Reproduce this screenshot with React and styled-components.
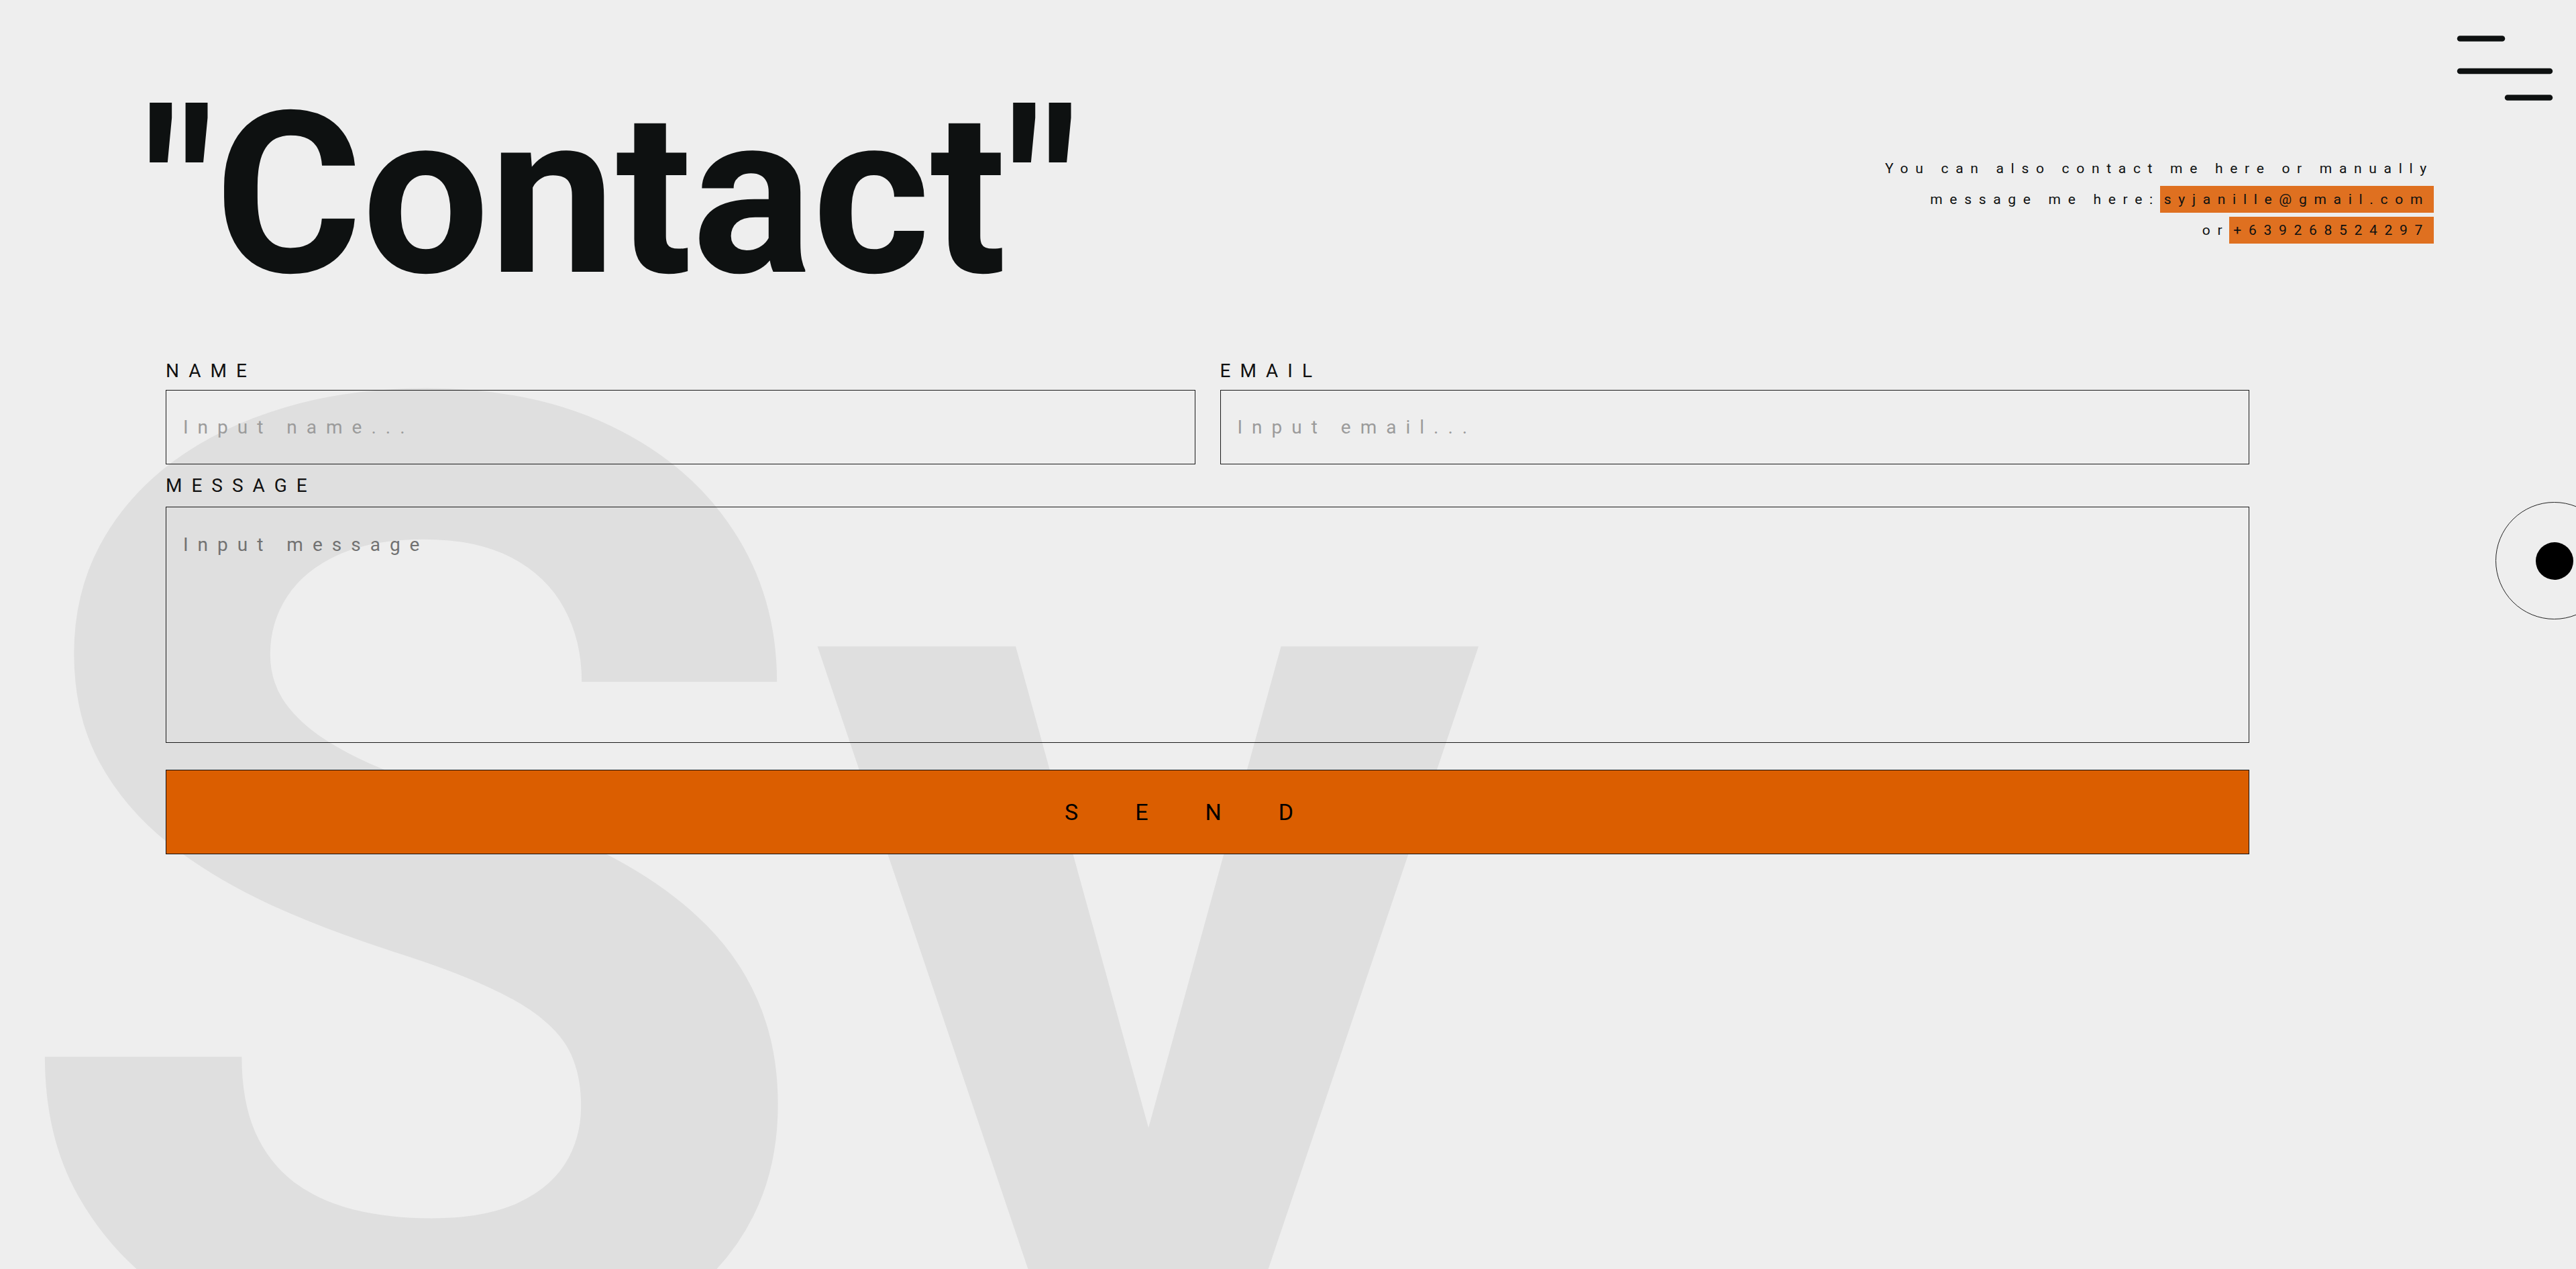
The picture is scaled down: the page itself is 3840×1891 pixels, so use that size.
import React from "react";
import styled, { createGlobalStyle } from "styled-components";

const GlobalStyle = createGlobalStyle`
  html, body {
    margin: 0;
    padding: 0;
    background: #eeeeee;
  }
  body {
    font-family: Roboto, "Liberation Sans", Arial, sans-serif;
    color: #0e1111;
  }
  * { box-sizing: border-box; }
`;

const Page = styled.div`
  position: relative;
  width: 100%;
  height: 1891px;
  overflow: hidden;
  background: #eeeeee;
`;

const Watermark = styled.div`
  position: absolute;
  left: -1px;
  top: 337px;
  font-family: Roboto, "Liberation Sans", sans-serif;
  font-size: 2000px;
  font-weight: 700;
  line-height: 1;
  letter-spacing: -0.012em;
  color: #dfdfdf;
  white-space: nowrap;
  pointer-events: none;
  user-select: none;
  z-index: 0;
`;

const Content = styled.main`
  position: relative;
  z-index: 1;
  padding-top: 122px;
`;

const Header = styled.header`
  display: flex;
  justify-content: space-between;
  align-items: flex-start;
  padding: 0 212px 0 213px;
`;

const Title = styled.h1`
  margin: 0;
  font-size: 336px;
  font-weight: 700;
  line-height: 1;
  color: #0e1111;
  letter-spacing: 0;
`;

const ContactNote = styled.p`
  margin: 106px 0 0;
  font-size: 21px;
  line-height: 46px;
  letter-spacing: 10.7px;
  text-align: right;
  color: #0e1111;
`;

const Mark = styled.span`
  background: #df7020;
  padding: 8px 6px;
  color: #0e1111;
`;

const Form = styled.form`
  display: grid;
  grid-template-columns: 1fr 1fr;
  column-gap: 37px;
  row-gap: 16px;
  width: 3106px;
  margin: 79px 0 0 247px;
`;

const Field = styled.div`
  display: flex;
  flex-direction: column;
  gap: ${(p) => p.$gap || 11}px;
  grid-column: ${(p) => (p.$wide ? "1 / -1" : "auto")};
`;

const Label = styled.label`
  font-size: 28px;
  letter-spacing: 0.5em;
  line-height: 1.172;
  color: #111;
`;

const Input = styled.input`
  height: 111px;
  width: 100%;
  padding: 0 25px;
  background: transparent;
  border: 1px solid #1a1a1a;
  font-family: Roboto, "Liberation Sans", sans-serif;
  font-size: 28px;
  letter-spacing: 0.5em;
  color: #111;
  outline: none;
  &::placeholder { color: #9b9b9b; }
`;

const TextArea = styled.textarea`
  display: block;
  height: 352px;
  width: 100%;
  padding: 40px 25px 30px;
  background: transparent;
  border: 1px solid #1a1a1a;
  font-family: Roboto, "Liberation Sans", sans-serif;
  font-size: 28px;
  line-height: 1.172;
  letter-spacing: 0.5em;
  color: #111;
  resize: none;
  outline: none;
  &::placeholder { color: #727272; }
`;

const SendButton = styled.button`
  grid-column: 1 / -1;
  margin-top: 24px;
  height: 126px;
  background: #db5e00;
  border: 1px solid #111;
  font-family: Roboto, "Liberation Sans", sans-serif;
  font-size: 34px;
  letter-spacing: 2.5em;
  color: #000;
  cursor: pointer;
`;

const MenuButton = styled.button`
  position: absolute;
  top: 45px;
  right: 25px;
  width: 160px;
  height: 110px;
  padding: 0;
  border: 0;
  background: transparent;
  z-index: 2;
  svg { display: block; }
`;

const ScrollRing = styled.div`
  position: absolute;
  left: 3720px;
  top: 748px;
  width: 175px;
  height: 175px;
  border: 1.5px solid #222;
  border-radius: 50%;
  display: flex;
  align-items: center;
  justify-content: center;
  z-index: 2;
`;

const ScrollDot = styled.div`
  width: 56px;
  height: 56px;
  border-radius: 50%;
  background: #000;
`;

export default function App() {
  return (
    <>
      <GlobalStyle />
      <Page>
        <Watermark aria-hidden="true">Sv</Watermark>
        <MenuButton aria-label="Menu">
          <svg width="160" height="110" viewBox="0 0 160 110">
            <g stroke="#0e1111" strokeWidth="8.5" strokeLinecap="round">
              <line x1="12" y1="12.5" x2="75" y2="12.5" />
              <line x1="12" y1="61" x2="146" y2="61" />
              <line x1="83" y1="100.5" x2="146" y2="100.5" />
            </g>
          </svg>
        </MenuButton>
        <ScrollRing>
          <ScrollDot />
        </ScrollRing>
        <Content>
          <Header>
            <Title>"Contact"</Title>
            <ContactNote>
              You can also contact me here or manually
              <br />
              message me here:<Mark>syjanille@gmail.com</Mark>
              <br />
              or<Mark>+639268524297</Mark>
            </ContactNote>
          </Header>
          <Form onSubmit={(e) => e.preventDefault()}>
            <Field>
              <Label htmlFor="name">NAME</Label>
              <Input id="name" type="text" placeholder="Input name..." />
            </Field>
            <Field>
              <Label htmlFor="email">EMAIL</Label>
              <Input id="email" type="email" placeholder="Input email..." />
            </Field>
            <Field $wide $gap={14}>
              <Label htmlFor="message">MESSAGE</Label>
              <TextArea id="message" placeholder="Input message" />
            </Field>
            <SendButton type="submit">SEND</SendButton>
          </Form>
        </Content>
      </Page>
    </>
  );
}
